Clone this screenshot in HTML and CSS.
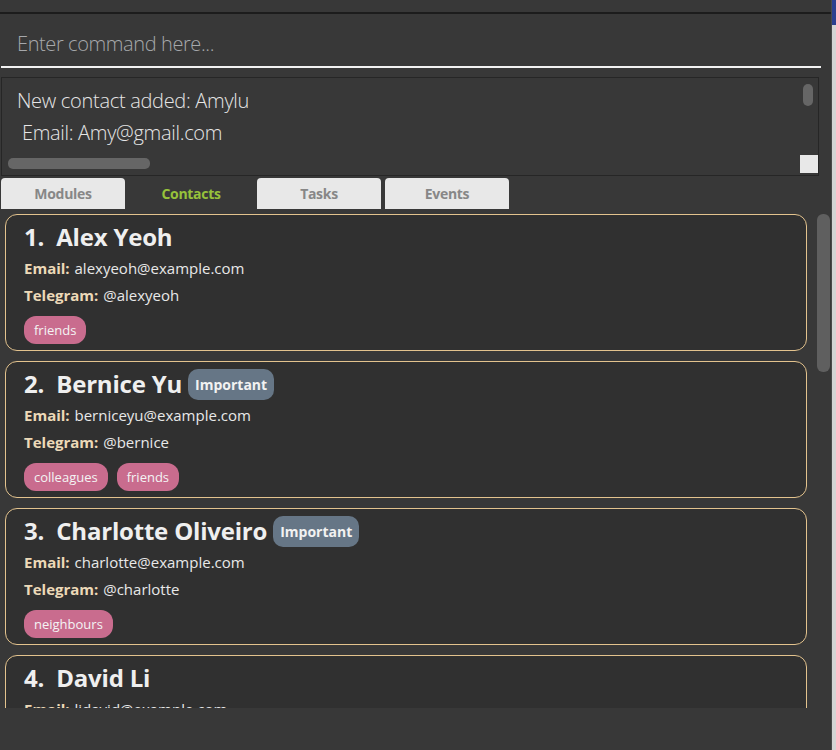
FILE: index.html
```html
<!DOCTYPE html>
<html>
<head>
<meta charset="utf-8">
<link rel="stylesheet" href="styles.css">
</head>
<body>
<div class="app">
  <div class="menubar"></div>
  <div class="command">
    <div class="command-input">Enter command here...</div>
  </div>
  <div class="result">
    <div class="result-text">
      <div>New contact added: Amylu</div>
      <div>&nbsp;Email: Amy@gmail.com</div>
    </div>
    <div class="vthumb"></div>
    <div class="hthumb"></div>
    <div class="corner"></div>
  </div>
  <div class="tabs">
    <div class="tab">Modules</div>
    <div class="tab active">Contacts</div>
    <div class="tab">Tasks</div>
    <div class="tab">Events</div>
  </div>
  <div class="list">
    <div class="cards">
      <div class="card">
        <div class="name-row"><span class="name">1.&nbsp; Alex Yeoh</span></div>
        <div class="field"><b>Email:</b> alexyeoh@example.com</div>
        <div class="field"><b>Telegram:</b> @alexyeoh</div>
        <div class="tags"><span class="tag">friends</span></div>
      </div>
      <div class="card">
        <div class="name-row"><span class="name">2.&nbsp; Bernice Yu</span><span class="badge">Important</span></div>
        <div class="field"><b>Email:</b> berniceyu@example.com</div>
        <div class="field"><b>Telegram:</b> @bernice</div>
        <div class="tags"><span class="tag">colleagues</span><span class="tag">friends</span></div>
      </div>
      <div class="card">
        <div class="name-row"><span class="name">3.&nbsp; Charlotte Oliveiro</span><span class="badge">Important</span></div>
        <div class="field"><b>Email:</b> charlotte@example.com</div>
        <div class="field"><b>Telegram:</b> @charlotte</div>
        <div class="tags"><span class="tag">neighbours</span></div>
      </div>
      <div class="card">
        <div class="name-row"><span class="name">4.&nbsp; David Li</span></div>
        <div class="field"><b>Email:</b> lidavid@example.com</div>
      </div>
    </div>
    <div class="vtrack"><div class="thumb"></div></div>
  </div>
  <div class="status"></div>
</div>
<div class="edge"><div class="edge-top"></div></div>
</body>
</html>
```
FILE: styles.css
```css
html, body {
  margin: 0;
  padding: 0;
}
body {
  width: 836px;
  height: 750px;
  overflow: hidden;
  background: #383838;
  display: flex;
  font-family: "Open Sans", "Noto Sans", sans-serif;
}
.app {
  width: 831px;
  display: flex;
  flex-direction: column;
  height: 750px;
}
.edge {
  width: 5px;
  background: #d4d4d4;
  border-left: 1px solid #4a4a4a;
  box-sizing: border-box;
}
.edge-top {
  height: 25px;
  background: #2c3f8f;
}
.menubar {
  height: 12px;
  border-bottom: 2px solid #1c1c1c;
  background: #383838;
}
.command {
  height: 54px;
  padding-left: 1px;
  padding-right: 10px;
}
.command-input {
  height: 52px;
  border-bottom: 2px solid #f2f2f2;
  font-weight: 300;
  font-size: 20px;
  line-height: 60px;
  color: #a6a8ab;
  padding-left: 16px;
  letter-spacing: -0.4px;
}
.result {
  margin-top: 9px;
  margin-left: 1px;
  width: 818px;
  height: 99px;
  box-sizing: border-box;
  border: 1px solid #262626;
  position: relative;
  background: #383838;
}
.result-text {
  padding: 7px 0 0 15px;
  font-weight: 300;
  font-size: 20px;
  line-height: 32px;
  color: #e6e6e6;
  letter-spacing: -0.3px;
}
.vthumb {
  position: absolute;
  left: 801px;
  top: 6px;
  width: 10px;
  height: 22px;
  border-radius: 5px;
  background: #666;
}
.hthumb {
  position: absolute;
  left: 6px;
  top: 80px;
  width: 142px;
  height: 11px;
  border-radius: 5px;
  background: #666;
}
.corner {
  position: absolute;
  left: 798px;
  top: 77px;
  width: 18px;
  height: 18px;
  background: #e8e8e8;
}
.tabs {
  margin-top: 2px;
  height: 31px;
  display: flex;
  gap: 4px;
  padding-left: 1px;
}
.tab {
  width: 124px;
  height: 31px;
  background: #e8e8e8;
  border-radius: 4px 4px 0 0;
  color: #878787;
  font-weight: 700;
  font-size: 14px;
  line-height: 31px;
  text-align: center;
  letter-spacing: -0.3px;
}
.tab.active {
  background: transparent;
  color: #96c23b;
}
.list {
  height: 499px;
  display: flex;
  overflow: hidden;
}
.cards {
  width: 802px;
  margin-left: 5px;
  padding-top: 5px;
  display: flex;
  flex-direction: column;
  gap: 10px;
}
.card {
  flex: none;
  height: 137px;
  box-sizing: border-box;
  border: 1.5px solid #e3c38e;
  border-radius: 12px;
  background: #303030;
  padding: 2px 0 0 18px;
}
.name-row {
  height: 38px;
  display: flex;
  align-items: center;
  gap: 6px;
}
.name {
  font-size: 24px;
  font-weight: 700;
  color: #efefef;
  letter-spacing: -0.2px;
}
.badge {
  background: #667686;
  color: #f2f2f2;
  font-weight: 700;
  font-size: 14px;
  height: 31px;
  line-height: 31px;
  padding: 0 7px;
  border-radius: 10px;
  margin-top: 2px;
}
.field {
  height: 27px;
  line-height: 27px;
  font-size: 15px;
  color: #e8e8e8;
  word-spacing: 1px;
}
.field b {
  color: #ecd9b8;
  font-weight: 700;
}
.tags {
  margin-top: 7px;
  display: flex;
  gap: 9px;
}
.tag {
  background: #c96c8e;
  color: #f4f4f4;
  font-size: 13px;
  height: 28px;
  line-height: 28px;
  padding: 0 10px;
  border-radius: 12px;
}
.vtrack {
  width: 24px;
  padding-left: 10px;
  box-sizing: border-box;
  padding-top: 5px;
}
.thumb {
  width: 13px;
  height: 158px;
  border-radius: 6px;
  background: #5f5f5f;
}
.status {
  flex: 1;
  background: #383838;
}
```
